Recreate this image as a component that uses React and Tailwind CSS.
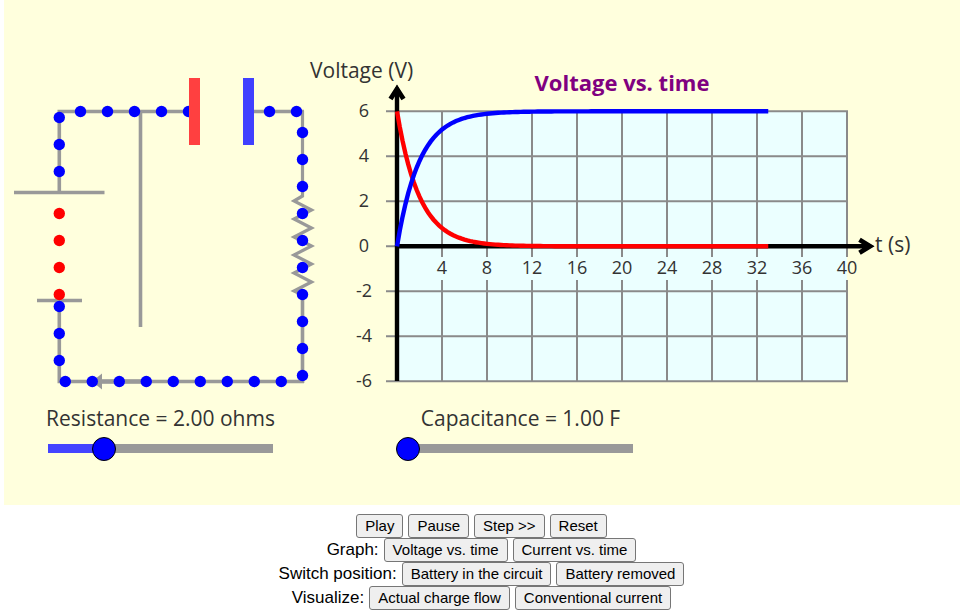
import { useState } from "react";

const range = (from, count, step) => Array.from({ length: count }, (_, i) => from + i * step);

const at = (xs, y) => xs.map((x) => [x, y]);
const down = (x, ys) => ys.map((y) => [x, y]);

const BLUE_CHARGES = [
  ...at([80.5, 107.5, 134.5, 161.5, 188.5, 269.5, 296.5], 111.5),
  ...down(59.3, [117.5, 144.5, 171.5, 306.5, 333.5, 360.5]),
  ...at(range(65.3, 9, 27), 381.5),
  ...down(302.5, range(132.5, 10, 27)),
];
const RED_CHARGES = down(59.3, range(213.5, 4, 27));

const X0 = 397;
const Y0 = 246;
const END_TIME = 33;

function curve(volts) {
  return range(0, END_TIME * 4 + 1, 0.25)
    .map((t) => `${(X0 + t * 11.25).toFixed(2)},${(Y0 - volts(t) * 22.5).toFixed(2)}`)
    .join(" ");
}

function Charges({ points, className }) {
  return points.map(([x, y]) => <circle key={`${x}-${y}`} cx={x} cy={y} r="5.7" className={className} />);
}

function Circuit() {
  return (
    <svg viewBox="4 0 306 400" className="block h-auto w-full overflow-visible" role="img" aria-label="RC circuit">
      <g fill="none" stroke="#999999" strokeWidth="3.6">
        <path d="M57.5 111.5H190M59.3 111V192M14 192.5H104.5M37 300.5H82M59.3 300V381.5M57.5 381.5H304M302.5 383V291M254 111.5H304M140.5 111V327" />
        <path d="M302.5 111V196L294 201L311.5 210L294 219L311.5 228L294 237L311.5 246L294 255L311.5 264L294 273L311.5 282L294 291L302.5 295" strokeWidth="3.2" />
        <path d="M100 381.5H146" strokeWidth="4.6" />
      </g>
      <path d="M92 381.5L102 373.5V389.5Z" fill="#999999" />
      <Charges points={BLUE_CHARGES} className="fill-[#0000ff]" />
      <Charges points={RED_CHARGES} className="fill-[#ff0000]" />
      <rect x="189" y="78" width="11" height="67" fill="#ff4040" />
      <rect x="243" y="78" width="11" height="67" fill="#4040ff" />
    </svg>
  );
}

function Graph({ resistance, capacitance }) {
  const tau = resistance * capacitance;
  return (
    <svg viewBox="310 0 650 400" className="block h-auto w-full overflow-visible" role="img" aria-label="Voltage vs. time graph">
      <rect x="397" y="111.3" width="450" height="270" fill="#ebffff" />
      <g stroke="#8a8a8a" strokeWidth="2">
        {range(111.3, 7, 45).map((y) => (
          <path key={y} d={`M386 ${y}H848`} />
        ))}
        {range(442, 10, 45).map((x) => (
          <path key={x} d={`M${x} 111V257M${x} 280V382`} />
        ))}
      </g>
      <g fill="none" stroke="#000000" strokeWidth="4.4">
        <path d="M397 381V90M397 246.3H868" />
        <path d="M390.5 99L397 89L403.5 99M859.5 239.8L870 246.3L859.5 252.8" strokeWidth="4.8" />
      </g>
      <path d="M397 85L403 96H391ZM874 246.3L862 240V252.6Z" fill="#000000" />
      <g fill="none" strokeWidth="4.4" transform="translate(0 0.3)">
        <polyline stroke="#ff0000" points={curve((t) => 6 * Math.exp(-t / tau))} />
        <polyline stroke="#0000ff" points={curve((t) => 6 * (1 - Math.exp(-t / tau)))} />
      </g>
      <g className="fill-[#333333] text-[18px]" textAnchor="middle">
        {range(6, 7, -2).map((v) => (
          <text key={v} x="364" y={252 - v * 22.5}>{v}</text>
        ))}
        {range(4, 10, 4).map((t) => (
          <text key={t} x={X0 + t * 11.25} y="274">{t}</text>
        ))}
      </g>
      <text x="310" y="78" className="fill-[#333333] text-[21px]">Voltage (V)</text>
      <text x="875" y="252" className="fill-[#333333] text-[21px]">t (s)</text>
      <text x="622" y="91" textAnchor="middle" className="fill-[#800080] text-[22px] font-bold">Voltage vs. time</text>
    </svg>
  );
}

function Slider({ id, label, unit, value, onChange }) {
  const filled = ((value - 1) / 4) * 100;
  return (
    <div className="flex w-[249px] flex-col items-center">
      <label htmlFor={id} className="text-[21px] leading-7 whitespace-nowrap text-[#333333]">
        {`${label} = ${value.toFixed(2)} ${unit}`}
      </label>
      <input
        id={id}
        type="range"
        min="1"
        max="5"
        step="0.1"
        value={value}
        onChange={(e) => onChange(Number(e.target.value))}
        style={{ backgroundImage: `linear-gradient(to right, #4444ff ${filled}%, #999999 ${filled}%)` }}
        className="mt-1 h-[25px] w-full appearance-none bg-transparent bg-[length:225px_9px] bg-center bg-no-repeat [&::-webkit-slider-thumb]:size-6 [&::-webkit-slider-thumb]:appearance-none [&::-webkit-slider-thumb]:rounded-full [&::-webkit-slider-thumb]:border [&::-webkit-slider-thumb]:border-black [&::-webkit-slider-thumb]:bg-[#0000ff]"
      />
    </div>
  );
}

function ButtonRow({ label, buttons }) {
  return (
    <div className="flex flex-wrap items-center justify-center gap-x-[5px]">
      {label && <span className="text-[17px]">{label}</span>}
      {buttons.map((text) => (
        <button key={text} type="button" className="h-6 rounded-[3px] border border-[#767676] bg-[#efefef] px-2 text-[15px] leading-5">
          {text}
        </button>
      ))}
    </div>
  );
}

export default function App() {
  const [resistance, setResistance] = useState(2);
  const [capacitance, setCapacitance] = useState(1);
  return (
    <main className="bg-white font-['Liberation_Sans',Arial,sans-serif] text-base leading-6 text-black">
      <section className="mr-[3px] ml-1 grid grid-cols-[306fr_650fr] bg-[#ffffdd] pb-11 font-['Open_Sans','Noto_Sans',sans-serif]">
        <Circuit />
        <Graph resistance={resistance} capacitance={capacitance} />
        <div className="pt-1 pl-8">
          <Slider id="resistance" label="Resistance" unit="ohms" value={resistance} onChange={setResistance} />
        </div>
        <div className="pt-1 pl-[86px]">
          <Slider id="capacitance" label="Capacitance" unit="F" value={capacitance} onChange={setCapacitance} />
        </div>
      </section>
      <section className="mt-[9px]">
        <ButtonRow buttons={["Play", "Pause", "Step >>", "Reset"]} />
        <ButtonRow label="Graph:" buttons={["Voltage vs. time", "Current vs. time"]} />
        <ButtonRow label="Switch position:" buttons={["Battery in the circuit", "Battery removed"]} />
        <ButtonRow label="Visualize:" buttons={["Actual charge flow", "Conventional current"]} />
      </section>
    </main>
  );
}
